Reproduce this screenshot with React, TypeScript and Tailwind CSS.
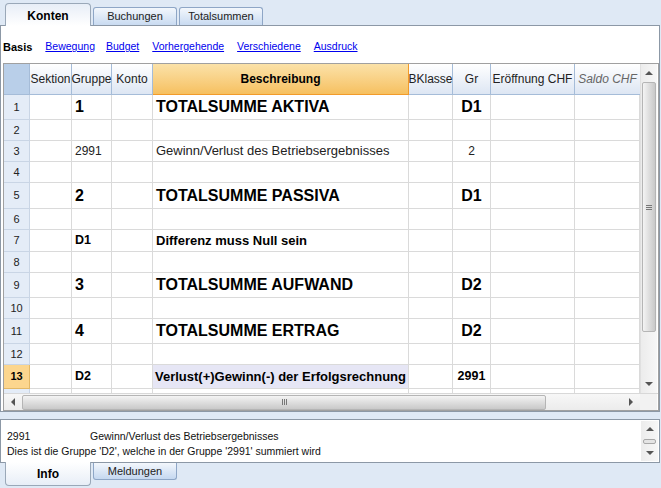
import React from "react";

type Row = {
  n: number;
  h: string;
  gruppe?: string;
  text?: string;
  gr?: string;
  kind?: "big" | "bold" | "plain";
};

const rows: Row[] = [
  { n: 1, h: "h-[25px]", gruppe: "1", text: "TOTALSUMME AKTIVA", gr: "D1", kind: "big" },
  { n: 2, h: "h-[21px]" },
  { n: 3, h: "h-[21px]", gruppe: "2991", text: "Gewinn/Verlust des Betriebsergebnisses", gr: "2", kind: "plain" },
  { n: 4, h: "h-[21px]" },
  { n: 5, h: "h-[26px]", gruppe: "2", text: "TOTALSUMME PASSIVA", gr: "D1", kind: "big" },
  { n: 6, h: "h-[21px]" },
  { n: 7, h: "h-[22px]", gruppe: "D1", text: "Differenz muss Null sein", kind: "bold" },
  { n: 8, h: "h-[21px]" },
  { n: 9, h: "h-[25px]", gruppe: "3", text: "TOTALSUMME AUFWAND", gr: "D2", kind: "big" },
  { n: 10, h: "h-[21px]" },
  { n: 11, h: "h-[25px]", gruppe: "4", text: "TOTALSUMME ERTRAG", gr: "D2", kind: "big" },
  { n: 12, h: "h-[21px]" },
];

const cols = "grid grid-cols-[26px_42px_40px_41px_256px_44px_38px_84px_65px]";
const cell = "border-r border-b border-[#dadada] flex items-center overflow-hidden whitespace-nowrap";

// short values (Gruppe, Gr) stay smaller than the description text
function valueClass(kind?: Row["kind"]) {
  if (kind === "big") return "text-[16px] font-bold text-black";
  if (kind === "bold") return "text-[12.5px] font-bold text-black";
  return "text-[12px] text-[#222]";
}

function textClass(kind?: Row["kind"]) {
  if (kind === "big") return "text-[16px] font-bold text-black";
  if (kind === "bold") return "text-[13px] font-bold text-black";
  return "text-[13px] text-[#222]";
}

function Tab({ label, active, bottom }: { label: string; active?: boolean; bottom?: boolean }) {
  if (active) {
    return (
      <div
        className={
          "w-[86px] flex items-center justify-center text-[12px] font-bold text-black border-[#9aa8b8] " +
          (bottom
            ? "h-[24px] pt-px border-l border-r border-b rounded-b-[4px] bg-gradient-to-t from-[#e8eef7] to-white -mt-px"
            : "h-[23px] pt-px border-l border-r border-t rounded-t-[4px] bg-gradient-to-b from-[#e8eef7] to-white mt-[3px] -mb-px relative z-10")
        }
      >
        {label}
      </div>
    );
  }
  return (
    <div
      className={
        "w-[84px] flex items-center justify-center text-[11px] text-[#222] border-[#8ea6c6] " +
        (bottom
          ? "h-[17px] border-l border-r border-b rounded-b-[3px] bg-gradient-to-t from-[#c5d8f0] to-[#f3f7fc]"
          : "h-[18px] border-l border-r border-t rounded-t-[3px] bg-gradient-to-b from-[#f3f7fc] to-[#c9dbf1] mt-[7px]")
      }
    >
      {label}
    </div>
  );
}

function Arrow({ dir }: { dir: "up" | "down" | "left" | "right" }) {
  const pts = {
    up: "0,4 4,0 8,4",
    down: "0,0 8,0 4,4",
    left: "4,0 4,8 0,4",
    right: "0,0 0,8 4,4",
  }[dir];
  const vertical = dir === "up" || dir === "down";
  return (
    <svg width={vertical ? 8 : 4} height={vertical ? 4 : 8} viewBox={vertical ? "0 0 8 4" : "0 0 4 8"}>
      <polygon points={pts} fill="#555" />
    </svg>
  );
}

export default function App() {
  return (
    <div className="w-[661px] h-[488px] bg-[#dfe9f5] flex flex-col overflow-hidden font-['Liberation_Sans',Arial,sans-serif]">
      {/* Top tabs */}
      <div className="h-[25px] flex items-start pl-[5px] gap-[2px] shrink-0">
        <Tab label="Konten" active />
        <Tab label="Buchungen" />
        <Tab label="Totalsummen" />
      </div>

      {/* Main frame */}
      <div className="w-[660px] h-[387px] border border-[#8c98a6] bg-white flex flex-col shrink-0">
        {/* Link bar */}
        <div className="h-[37px] flex items-center pl-[2px] pt-[5px] text-[10.5px]">
          <span className="font-bold text-black text-[11px] mr-[13px]">Basis</span>
          <a className="text-[#0000ee] underline mr-[11px]">Bewegung</a>
          <a className="text-[#0000ee] underline mr-[13px]">Budget</a>
          <a className="text-[#0000ee] underline mr-[13px]">Vorhergehende</a>
          <a className="text-[#0000ee] underline mr-[13px]">Verschiedene</a>
          <a className="text-[#0000ee] underline">Ausdruck</a>
        </div>

        {/* Grid box */}
        <div className="ml-[2px] w-[656px] h-[348px] border border-[#a0a0a0] flex flex-col">
          <div className="flex h-[329px]">
            <div className="w-[636px] h-[329px] overflow-hidden">
              {/* Header */}
              <div className={cols + " h-[31px] text-[12px] text-[#222]"}>
                <div className="bg-[#b9cfe9] border-r border-b border-[#a5bcd8]" />
                {["Sektion", "Gruppe", "Konto"].map((h) => (
                  <div
                    key={h}
                    className="bg-gradient-to-b from-white to-[#dde6f3] border-r border-b border-[#a5bcd8] flex items-center justify-center"
                  >
                    {h}
                  </div>
                ))}
                <div className="bg-gradient-to-b from-[#fbe2a8] to-[#f6c05f] border-r border-b border-[#f29b2a] flex items-center justify-center font-bold text-black">
                  Beschreibung
                </div>
                {["BKlasse", "Gr", "Eröffnung CHF"].map((h) => (
                  <div
                    key={h}
                    className="bg-gradient-to-b from-white to-[#dde6f3] border-r border-b border-[#a5bcd8] flex items-center justify-center whitespace-nowrap"
                  >
                    {h}
                  </div>
                ))}
                <div className="bg-gradient-to-b from-white to-[#dde6f3] border-b border-[#a5bcd8] flex items-center justify-center italic text-[#666] whitespace-nowrap">
                  Saldo CHF
                </div>
              </div>

              {/* Rows */}
              {rows.map((r) => (
                <div key={r.n} className={cols + " " + r.h}>
                  <div className="bg-[#e4ecf7] border-r border-b border-[#c9d5e5] flex items-center justify-center text-[11px] text-[#222]">
                    {r.n}
                  </div>
                  <div className={cell} />
                  <div className={cell + " pl-[3px] " + valueClass(r.kind)}>{r.gruppe}</div>
                  <div className={cell} />
                  <div className={cell + " pl-[3px] " + textClass(r.kind)}>{r.text}</div>
                  <div className={cell} />
                  <div className={cell + " justify-center " + valueClass(r.kind)}>{r.gr}</div>
                  <div className={cell} />
                  <div className={cell} />
                </div>
              ))}

              {/* Selected row 13 */}
              <div className={cols + " h-[24px]"}>
                <div className="bg-[#fcd68e] border-r border-b border-[#e3b866] flex items-center justify-center text-[11px] font-bold text-black">
                  13
                </div>
                <div className={cell} />
                <div className={cell + " pl-[3px] " + valueClass("bold")}>D2</div>
                <div className={cell} />
                <div className={cell + " pl-[2px] bg-[#e6e6f5] " + textClass("bold")}>
                  Verlust(+)Gewinn(-) der Erfolgsrechnung
                </div>
                <div className={cell} />
                <div className={cell + " justify-center " + valueClass("bold")}>2991</div>
                <div className={cell} />
                <div className={cell} />
              </div>
              <div className={cols + " h-[21px]"}>
                <div className="bg-[#e4ecf7] border-r border-[#c9d5e5]" />
                {Array.from({ length: 8 }).map((_, i) => (
                  <div key={i} className="border-r border-[#dadada]" />
                ))}
              </div>
            </div>

            {/* Vertical scrollbar */}
            <div className="w-[17px] h-[329px] bg-gradient-to-r from-[#ececec] to-[#f7f7f7] border-l border-[#e0e0e0] flex flex-col">
              <div className="h-[18px] flex items-center justify-center">
                <Arrow dir="up" />
              </div>
              <div className="h-[250px] mx-[1px] rounded-[2px] border border-[#b5b5b5] bg-gradient-to-r from-[#f4f4f4] via-[#dedede] to-[#c9c9c9] flex items-center justify-center">
                <div className="w-[6px] flex flex-col gap-[1px]">
                  <div className="h-px bg-[#777]" />
                  <div className="h-px bg-[#777]" />
                  <div className="h-px bg-[#777]" />
                </div>
              </div>
              <div className="flex-1" />
              <div className="h-[19px] flex items-center justify-center">
                <Arrow dir="down" />
              </div>
            </div>
          </div>

          {/* Horizontal scrollbar */}
          <div className="flex h-[17px] border-t border-[#d8d8d8]">
            <div className="w-[636px] bg-gradient-to-b from-[#f7f7f7] to-[#ececec] flex items-center">
              <div className="w-[18px] flex items-center justify-center">
                <Arrow dir="left" />
              </div>
              <div className="w-[524px] h-[15px] rounded-[2px] border border-[#b5b5b5] bg-gradient-to-b from-[#f4f4f4] via-[#dedede] to-[#c9c9c9] flex items-center justify-center">
                <div className="h-[6px] flex gap-[1px]">
                  <div className="w-px bg-[#777]" />
                  <div className="w-px bg-[#777]" />
                  <div className="w-px bg-[#777]" />
                </div>
              </div>
              <div className="flex-1" />
              <div className="w-[18px] flex items-center justify-center">
                <Arrow dir="right" />
              </div>
            </div>
            <div className="w-[17px] bg-[#f2f2f2]" />
          </div>
        </div>
      </div>

      <div className="h-[7px] shrink-0" />

      {/* Info panel */}
      <div className="w-[660px] h-[44px] border border-[#8c98a6] bg-white flex shrink-0">
        <div className="flex-1 pl-[6px] pt-[9px] text-[10.5px] leading-[15px] text-[#111]">
          <div className="flex">
            <span className="w-[83px]">2991</span>
            <span>Gewinn/Verlust des Betriebsergebnisses</span>
          </div>
          <div>Dies ist die Gruppe 'D2', welche in der Gruppe '2991' summiert wird</div>
        </div>
        <div className="w-[17px] mr-[1px] my-[1px] bg-gradient-to-r from-[#ececec] to-[#f7f7f7] flex flex-col items-center justify-between py-[6px]">
          <Arrow dir="up" />
          <div className="w-[13px] h-[5px] rounded-[2px] border border-[#a8a8a8] bg-[#e4e4e4]" />
          <Arrow dir="down" />
        </div>
      </div>

      {/* Bottom tabs */}
      <div className="flex items-start pl-[5px] gap-[2px]">
        <Tab label="Info" active bottom />
        <Tab label="Meldungen" bottom />
      </div>
    </div>
  );
}
